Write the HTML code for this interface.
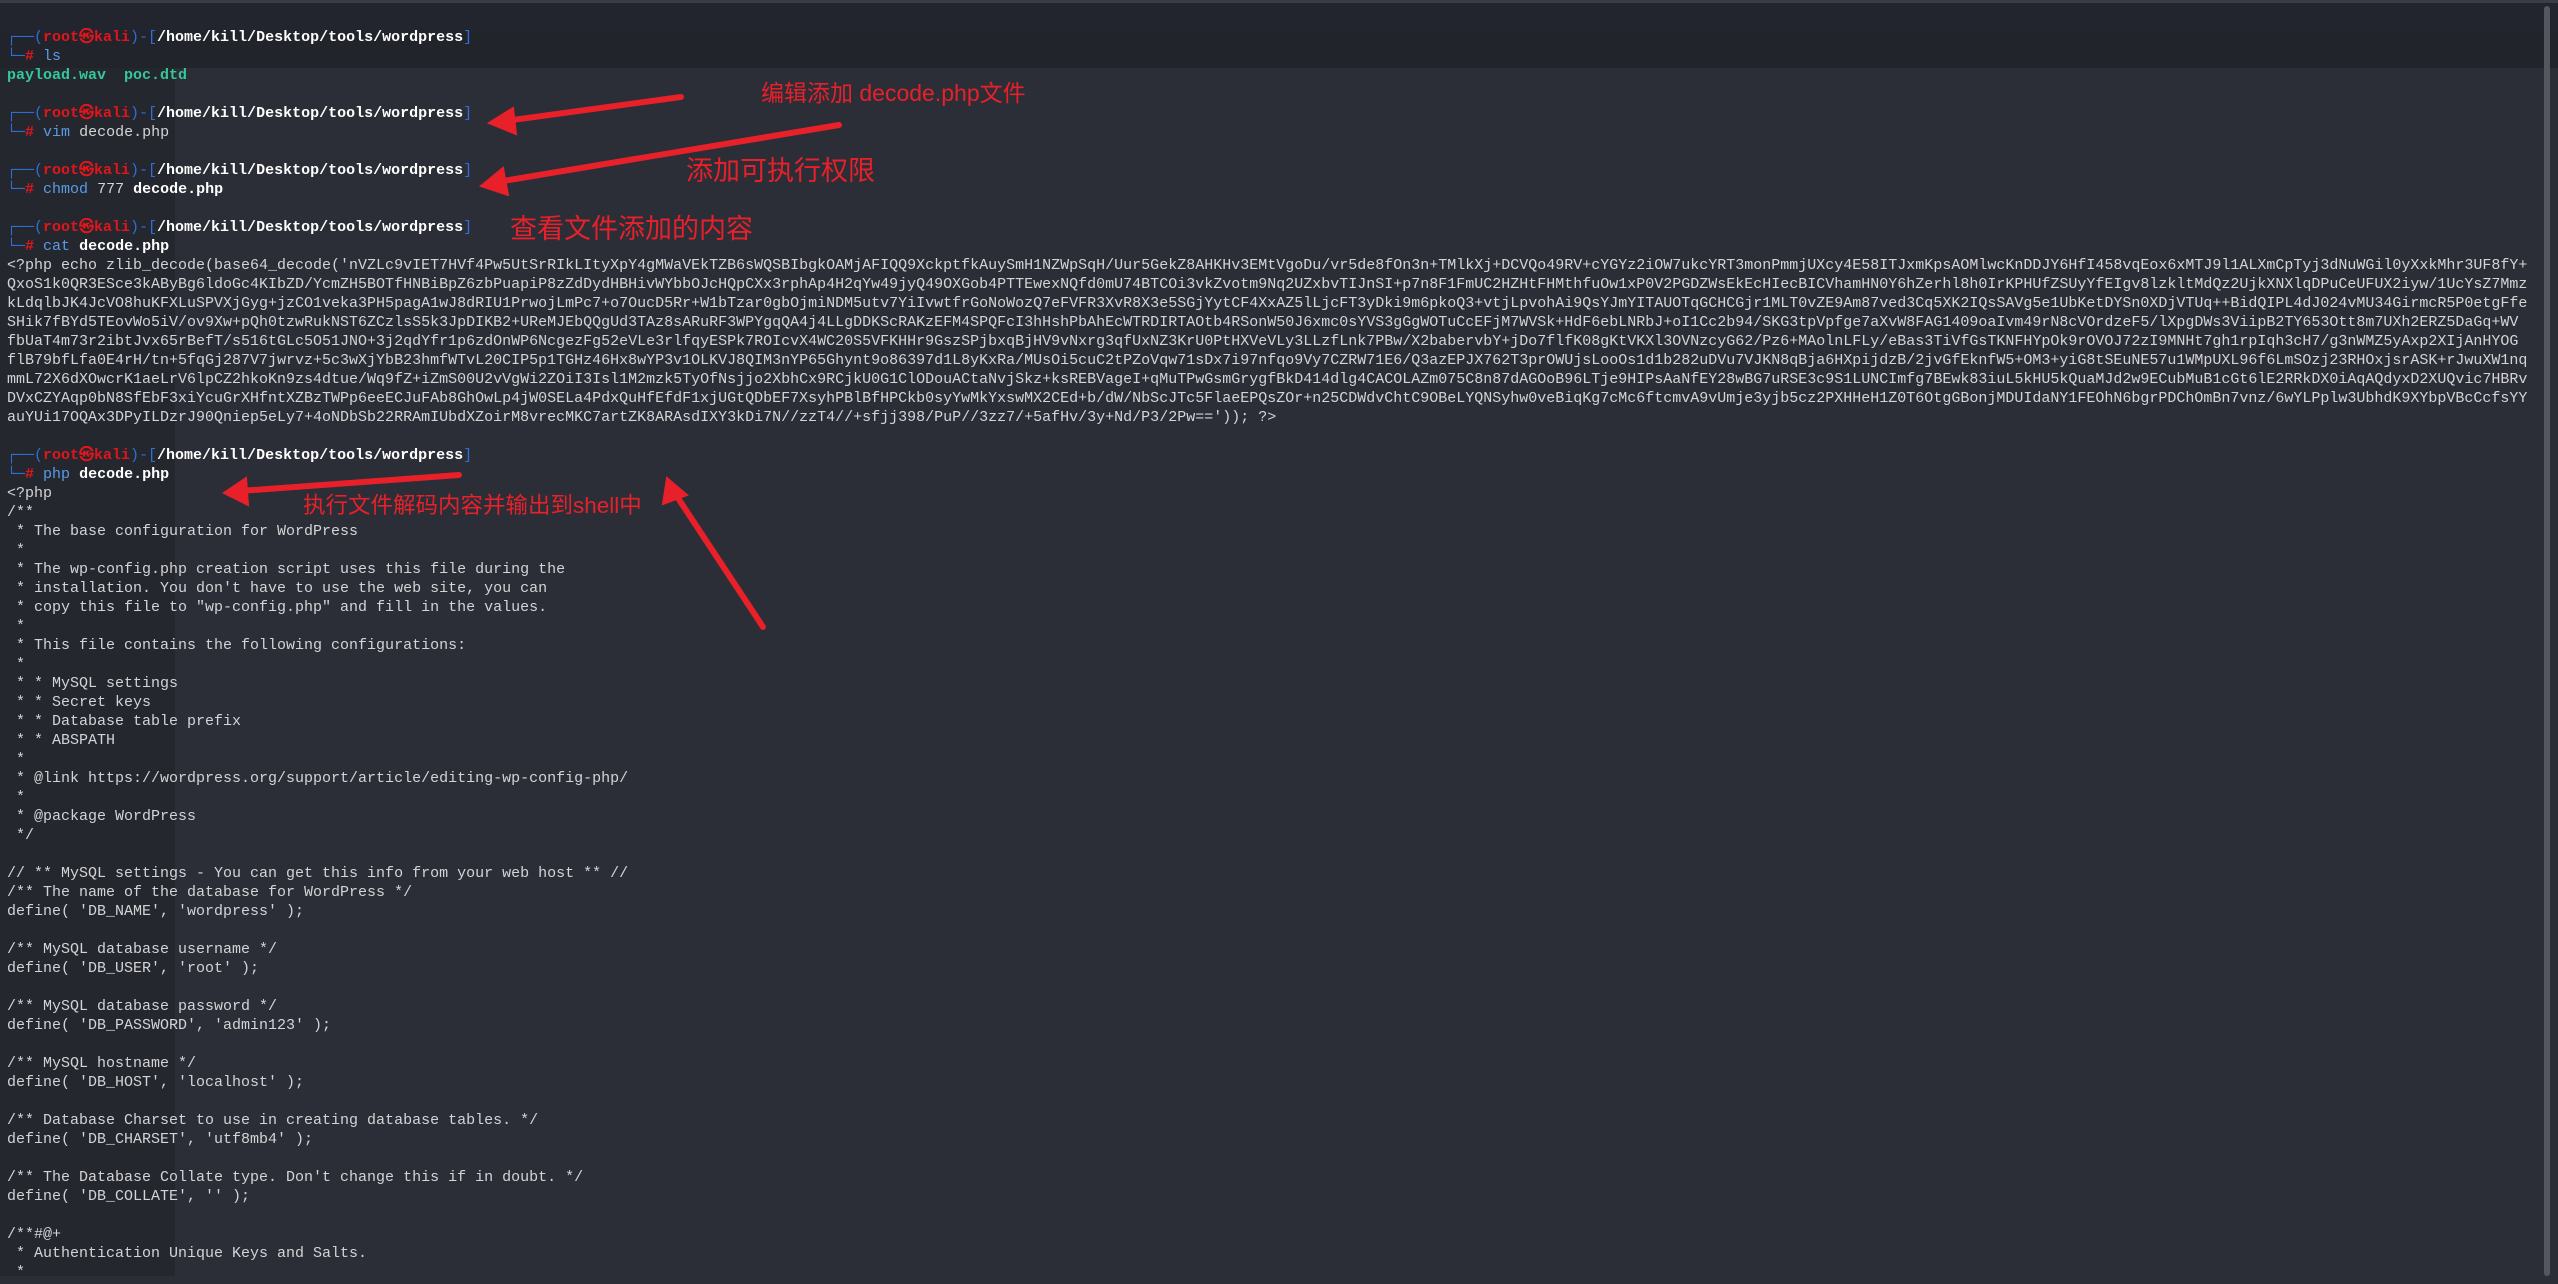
<!DOCTYPE html>
<html><head><meta charset="utf-8">
<style>
html,body{margin:0;padding:0}
body{width:2558px;height:1276px;background:#2b2e37;position:relative;overflow:hidden;font-family:"Liberation Mono","DejaVu Sans Mono",monospace;font-size:15px;color:#d4d4d6}
.band1{position:absolute;left:0;top:0;width:2558px;height:33px;background:#23252e}
.band2{position:absolute;left:0;top:33px;width:2558px;height:35px;background:#22242c}
.side{position:absolute;left:0;top:68px;width:175px;height:1208px;background:#25272f}
.topline{position:absolute;left:0;top:0;width:2558px;height:3px;background:#3a3d48}
.scroll{position:absolute;left:2544px;top:6px;width:6px;height:1270px;background:#55575e;border-radius:3px}
.l{position:absolute;left:7px;height:19px;line-height:19px;white-space:pre;width:2545px;overflow:hidden}
.b{color:#2d6fd6}.r{color:#e0161c;font-weight:bold}.w{color:#fff;font-weight:bold}.c{color:#5a9ae6}.t{color:#35c89a;font-weight:bold}
.ann{position:absolute;color:#e8202a;font-family:"Liberation Sans","Noto Sans CJK SC",sans-serif;white-space:nowrap;line-height:1}
svg{position:absolute;left:0;top:0}
</style></head><body>
<div class="band1"></div><div class="band2"></div><div class="side"></div><div class="topline"></div><div class="scroll"></div>

<div class="l" style="top:28px"><span class="b">┌──(</span><span class="r">root㉿kali</span><span class="b">)-[</span><span class="w">/home/kill/Desktop/tools/wordpress</span><span class="b">]</span></div>
<div class="l" style="top:47px"><span class="b">└─</span><span class="r">#</span> <span class="c">ls</span></div>
<div class="l" style="top:66px"><span class="t">payload.wav</span>  <span class="t">poc.dtd</span></div>
<div class="l" style="top:104px"><span class="b">┌──(</span><span class="r">root㉿kali</span><span class="b">)-[</span><span class="w">/home/kill/Desktop/tools/wordpress</span><span class="b">]</span></div>
<div class="l" style="top:123px"><span class="b">└─</span><span class="r">#</span> <span class="c">vim</span> decode.php</div>
<div class="l" style="top:161px"><span class="b">┌──(</span><span class="r">root㉿kali</span><span class="b">)-[</span><span class="w">/home/kill/Desktop/tools/wordpress</span><span class="b">]</span></div>
<div class="l" style="top:180px"><span class="b">└─</span><span class="r">#</span> <span class="c">chmod</span> 777 <span class="w">decode.php</span></div>
<div class="l" style="top:218px"><span class="b">┌──(</span><span class="r">root㉿kali</span><span class="b">)-[</span><span class="w">/home/kill/Desktop/tools/wordpress</span><span class="b">]</span></div>
<div class="l" style="top:237px"><span class="b">└─</span><span class="r">#</span> <span class="c">cat</span> <span class="w">decode.php</span></div>
<div class="l" style="top:256px">&lt;?php echo zlib_decode(base64_decode('nVZLc9vIET7HVf4Pw5UtSrRIkLItyXpY4gMWaVEkTZB6sWQSBIbgkOAMjAFIQQ9XckptfkAuySmH1NZWpSqH/Uur5GekZ8AHKHv3EMtVgoDu/vr5de8fOn3n+TMlkXj+DCVQo49RV+cYGYz2iOW7ukcYRT3monPmmjUXcy4E58ITJxmKpsAOMlwcKnDDJY6HfI458vqEox6xMTJ9l1ALXmCpTyj3dNuWGil0yXxkMhr3UF8fY+</div>
<div class="l" style="top:275px">QxoS1k0QR3ESce3kAByBg6ldoGc4KIbZD/YcmZH5BOTfHNBiBpZ6zbPuapiP8zZdDydHBHivWYbbOJcHQpCXx3rphAp4H2qYw49jyQ49OXGob4PTTEwexNQfd0mU74BTCOi3vkZvotm9Nq2UZxbvTIJnSI+p7n8F1FmUC2HZHtFHMthfuOw1xP0V2PGDZWsEkEcHIecBICVhamHN0Y6hZerhl8h0IrKPHUfZSUyYfEIgv8lzkltMdQz2UjkXNXlqDPuCeUFUX2iyw/1UcYsZ7Mmz</div>
<div class="l" style="top:294px">kLdqlbJK4JcVO8huKFXLuSPVXjGyg+jzCO1veka3PH5pagA1wJ8dRIU1PrwojLmPc7+o7OucD5Rr+W1bTzar0gbOjmiNDM5utv7YiIvwtfrGoNoWozQ7eFVFR3XvR8X3e5SGjYytCF4XxAZ5lLjcFT3yDki9m6pkoQ3+vtjLpvohAi9QsYJmYITAUOTqGCHCGjr1MLT0vZE9Am87ved3Cq5XK2IQsSAVg5e1UbKetDYSn0XDjVTUq++BidQIPL4dJ024vMU34GirmcR5P0etgFfe</div>
<div class="l" style="top:313px">SHik7fBYd5TEovWo5iV/ov9Xw+pQh0tzwRukNST6ZCzlsS5k3JpDIKB2+UReMJEbQQgUd3TAz8sARuRF3WPYgqQA4j4LLgDDKScRAKzEFM4SPQFcI3hHshPbAhEcWTRDIRTAOtb4RSonW50J6xmc0sYVS3gGgWOTuCcEFjM7WVSk+HdF6ebLNRbJ+oI1Cc2b94/SKG3tpVpfge7aXvW8FAG1409oaIvm49rN8cVOrdzeF5/lXpgDWs3ViipB2TY653Ott8m7UXh2ERZ5DaGq+WV</div>
<div class="l" style="top:332px">fbUaT4m73r2ibtJvx65rBefT/s516tGLc5O51JNO+3j2qdYfr1p6zdOnWP6NcgezFg52eVLe3rlfqyESPk7ROIcvX4WC20S5VFKHHr9GszSPjbxqBjHV9vNxrg3qfUxNZ3KrU0PtHXVeVLy3LLzfLnk7PBw/X2babervbY+jDo7flfK08gKtVKXl3OVNzcyG62/Pz6+MAolnLFLy/eBas3TiVfGsTKNFHYpOk9rOVOJ72zI9MNHt7gh1rpIqh3cH7/g3nWMZ5yAxp2XIjAnHYOG</div>
<div class="l" style="top:351px">flB79bfLfa0E4rH/tn+5fqGj287V7jwrvz+5c3wXjYbB23hmfWTvL20CIP5p1TGHz46Hx8wYP3v1OLKVJ8QIM3nYP65Ghynt9o86397d1L8yKxRa/MUsOi5cuC2tPZoVqw71sDx7i97nfqo9Vy7CZRW71E6/Q3azEPJX762T3prOWUjsLooOs1d1b282uDVu7VJKN8qBja6HXpijdzB/2jvGfEknfW5+OM3+yiG8tSEuNE57u1WMpUXL96f6LmSOzj23RHOxjsrASK+rJwuXW1nq</div>
<div class="l" style="top:370px">mmL72X6dXOwcrK1aeLrV6lpCZ2hkoKn9zs4dtue/Wq9fZ+iZmS00U2vVgWi2ZOiI3Isl1M2mzk5TyOfNsjjo2XbhCx9RCjkU0G1ClODouACtaNvjSkz+ksREBVageI+qMuTPwGsmGrygfBkD414dlg4CACOLAZm075C8n87dAGOoB96LTje9HIPsAaNfEY28wBG7uRSE3c9S1LUNCImfg7BEwk83iuL5kHU5kQuaMJd2w9ECubMuB1cGt6lE2RRkDX0iAqAQdyxD2XUQvic7HBRv</div>
<div class="l" style="top:389px">DVxCZYAqp0bN8SfEbF3xiYcuGrXHfntXZBzTWPp6eeECJuFAb8GhOwLp4jW0SELa4PdxQuHfEfdF1xjUGtQDbEF7XsyhPBlBfHPCkb0syYwMkYxswMX2CEd+b/dW/NbScJTc5FlaeEPQsZOr+n25CDWdvChtC9OBeLYQNSyhw0veBiqKg7cMc6ftcmvA9vUmje3yjb5cz2PXHHeH1Z0T6OtgGBonjMDUIdaNY1FEOhN6bgrPDChOmBn7vnz/6wYLPplw3UbhdK9XYbpVBcCcfsYY</div>
<div class="l" style="top:408px">auYUi17OQAx3DPyILDzrJ90Qniep5eLy7+4oNDbSb22RRAmIUbdXZoirM8vrecMKC7artZK8ARAsdIXY3kDi7N//zzT4//+sfjj398/PuP//3zz7/+5afHv/3y+Nd/P3/2Pw==')); ?&gt;</div>
<div class="l" style="top:446px"><span class="b">┌──(</span><span class="r">root㉿kali</span><span class="b">)-[</span><span class="w">/home/kill/Desktop/tools/wordpress</span><span class="b">]</span></div>
<div class="l" style="top:465px"><span class="b">└─</span><span class="r">#</span> <span class="c">php</span> <span class="w">decode.php</span></div>
<div class="l" style="top:484px;height:800px">&lt;?php
/**
 * The base configuration for WordPress
 *
 * The wp-config.php creation script uses this file during the
 * installation. You don't have to use the web site, you can
 * copy this file to "wp-config.php" and fill in the values.
 *
 * This file contains the following configurations:
 *
 * * MySQL settings
 * * Secret keys
 * * Database table prefix
 * * ABSPATH
 *
 * @link https://wordpress.org/support/article/editing-wp-config-php/
 *
 * @package WordPress
 */

// ** MySQL settings - You can get this info from your web host ** //
/** The name of the database for WordPress */
define( 'DB_NAME', 'wordpress' );

/** MySQL database username */
define( 'DB_USER', 'root' );

/** MySQL database password */
define( 'DB_PASSWORD', 'admin123' );

/** MySQL hostname */
define( 'DB_HOST', 'localhost' );

/** Database Charset to use in creating database tables. */
define( 'DB_CHARSET', 'utf8mb4' );

/** The Database Collate type. Don't change this if in doubt. */
define( 'DB_COLLATE', '' );

/**#@+
 * Authentication Unique Keys and Salts.
 *</div>

<div class="ann" style="left:761px;top:82px;font-size:23px">编辑添加 decode.php文件</div>
<div class="ann" style="left:686px;top:158px;font-size:27px">添加可执行权限</div>
<div class="ann" style="left:510px;top:216px;font-size:27px">查看文件添加的内容</div>
<div class="ann" style="left:303px;top:495px;font-size:22.5px">执行文件解码内容并输出到shell中</div>

<svg width="2558" height="1276" viewBox="0 0 2558 1276">
<g stroke="#e8202a" stroke-width="6" stroke-linecap="round" fill="#e8202a">
<line x1="681" y1="97" x2="505" y2="121"/>
<polygon points="489,123 513,108 516,134" stroke-width="2"/>
<line x1="839" y1="125" x2="497" y2="182"/>
<polygon points="481,186 503,168 508,195" stroke-width="2"/>
<line x1="459" y1="475" x2="240" y2="491"/>
<polygon points="224,493 246,478 248,505" stroke-width="2"/>
<line x1="763" y1="627" x2="674" y2="492"/>
<polygon points="667,478 687,495 663,504" stroke-width="2"/>
</g>
</svg>
</body></html>
